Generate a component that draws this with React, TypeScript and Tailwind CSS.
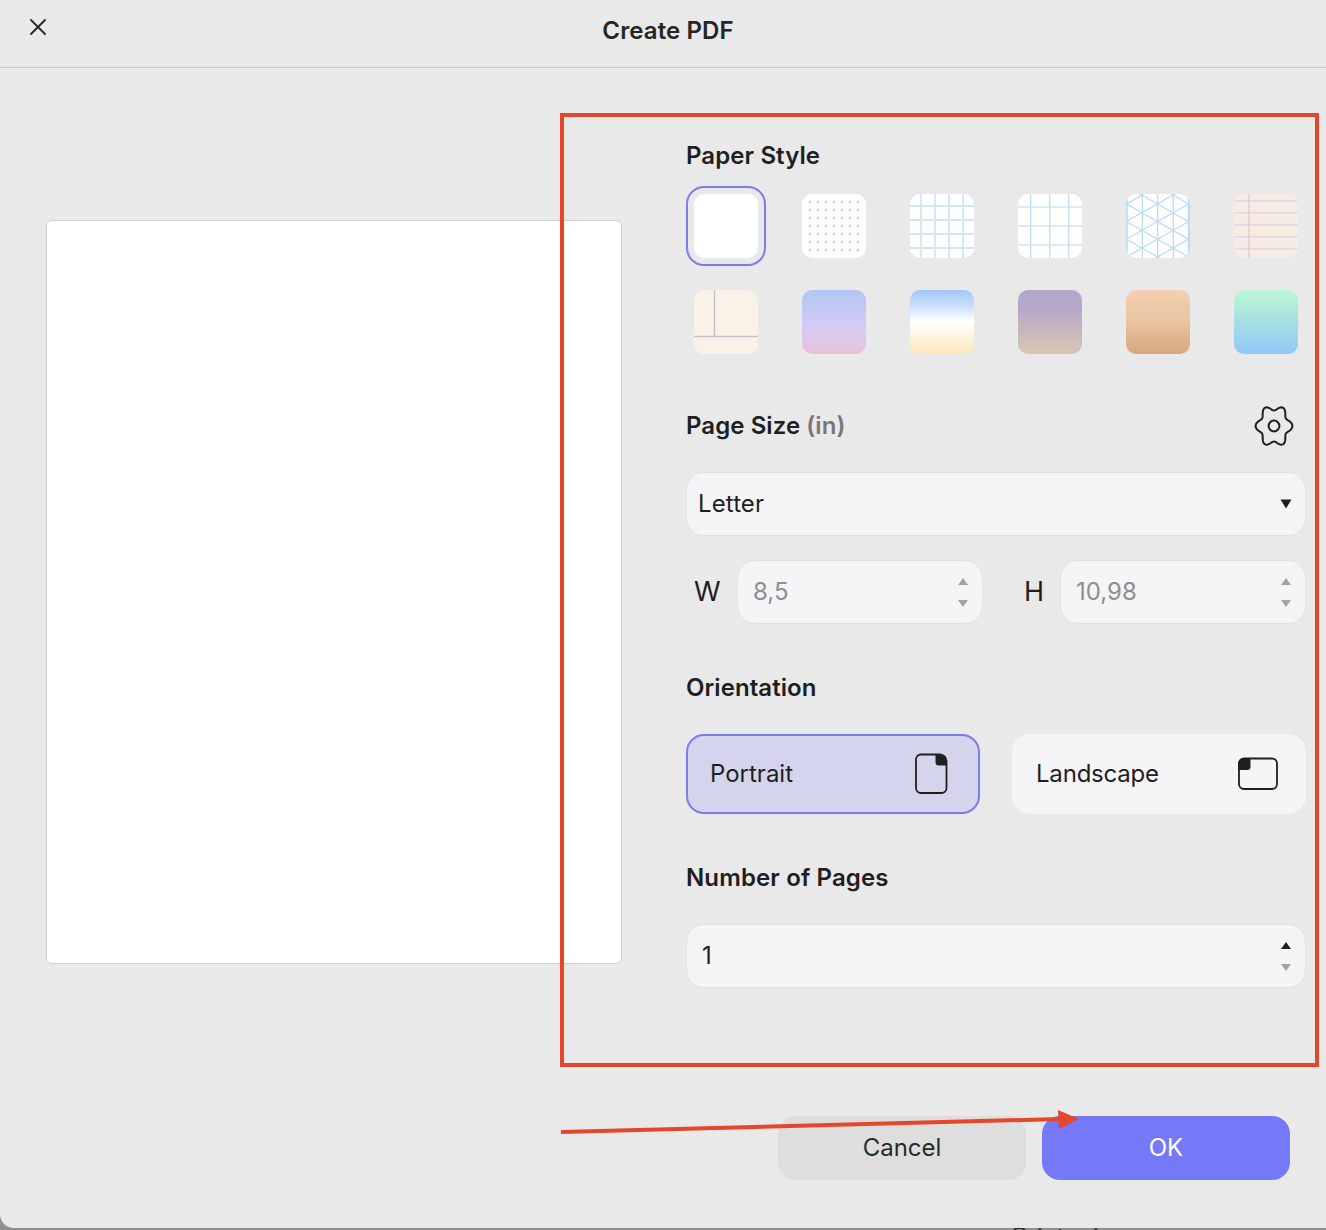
import { X } from 'lucide-react'

const FONT = "font-['Inter','Liberation_Sans',sans-serif]"

function Swatch({ className = '', children }: { className?: string; children?: React.ReactNode }) {
  return <div className={`w-16 h-16 rounded-[10px] overflow-hidden ${className}`}>{children}</div>
}

function Lines({ x = [], y = [], color, width = 1, xColor, xWidth }: { x?: number[]; y?: number[]; color: string; width?: number; xColor?: string; xWidth?: number }) {
  return (
    <svg viewBox="0 0 64 64" className="w-16 h-16 block">
      {y.map((v) => <line key={`y${v}`} x1="0" x2="64" y1={v} y2={v} stroke={color} strokeWidth={width} />)}
      {x.map((v) => <line key={`x${v}`} y1="0" y2="64" x1={v} x2={v} stroke={xColor ?? color} strokeWidth={xWidth ?? width} />)}
    </svg>
  )
}

function Dots() {
  const pos = [8, 16, 24, 32, 40, 48, 56]
  return (
    <svg viewBox="0 0 64 64" className="w-16 h-16 block">
      {pos.map((y) => pos.map((x) => <circle key={`${x}-${y}`} cx={x} cy={y} r="1.5" fill="#d4d4d6" />))}
    </svg>
  )
}

function Iso() {
  const c = '#bcdcf2'
  const rows = [-3, -2, -1, 0, 1, 2, 3, 4]
  return (
    <svg viewBox="0 0 64 64" className="w-16 h-16 block">
      {[0.5, 16.3, 31.7, 47.3, 63].map((v) => <line key={v} x1={v} x2={v} y1="0" y2="64" stroke={c} strokeWidth={v < 1 || v > 62 ? 2.5 : 1.3} />)}
      {rows.map((k) => <line key={`a${k}`} x1="0" x2="64" y1={-8.1 + 17.7 * k} y2={28.4 + 17.7 * k} stroke={c} strokeWidth="1.3" />)}
      {rows.map((k) => <line key={`b${k}`} x1="0" x2="64" y1={10.1 + 17.7 * k} y2={-26.4 + 17.7 * k} stroke={c} strokeWidth="1.3" />)}
    </svg>
  )
}

function Cornell() {
  return (
    <svg viewBox="0 0 64 64" className="w-16 h-16 block">
      <line x1="20.5" x2="20.5" y1="0" y2="46" stroke="#c2c1c8" strokeWidth="1.4" />
      <line x1="0" x2="64" y1="46.5" y2="46.5" stroke="#c2c1c8" strokeWidth="1.4" />
    </svg>
  )
}

// six lobes, a little taller than wide
function gearPath() {
  const pts: string[] = []
  for (let i = 0; i < 120; i++) {
    const a = (i / 120) * Math.PI * 2
    const r = 16 + 2.4 * Math.cos(6 * a)
    pts.push(`${(20 + r * Math.cos(a)).toFixed(2)} ${(20 + r * 1.14 * Math.sin(a)).toFixed(2)}`)
  }
  return `M${pts.join('L')}z`
}

function Gear() {
  return (
    <svg width="40" height="40" viewBox="0 0 40 40" fill="none" stroke="#1f1f22" strokeWidth="2">
      <path d={gearPath()} strokeLinejoin="round" />
      <circle cx="20" cy="20" r="5.4" />
    </svg>
  )
}

function Stepper({ upDark = false }: { upDark?: boolean }) {
  return (
    <div className="flex flex-col gap-[13px]">
      <svg width="12" height="9" viewBox="0 0 12 9"><path d="M6 1l5 7H1z" fill={upDark ? '#1f1f22' : '#a3a3a6'} /></svg>
      <svg width="12" height="9" viewBox="0 0 12 9"><path d="M1 1h10L6 8z" fill="#a3a3a6" /></svg>
    </div>
  )
}

function PortraitIcon() {
  return (
    <svg width="34" height="42" viewBox="0 0 34 42" fill="none">
      <path d="M7 1.5h19.5L32.5 7.5V35a5 5 0 0 1-5 5H7a5 5 0 0 1-5-5V6.5a5 5 0 0 1 5-5z" stroke="#1f1f22" strokeWidth="1.8" />
      <path d="M21.5 1h5.5a6 6 0 0 1 6 6v5.5H25a3.5 3.5 0 0 1-3.5-3.5z" fill="#1f1f22" />
    </svg>
  )
}

function LandscapeIcon() {
  return (
    <svg width="42" height="34" viewBox="0 0 42 34" fill="none">
      <path d="M7 1.5h28a5 5 0 0 1 5 5V27a5 5 0 0 1-5 5H7a5 5 0 0 1-5-5V6.5a5 5 0 0 1 5-5z" stroke="#1f1f22" strokeWidth="1.8" />
      <path d="M7 1h6.5v8.5a3.5 3.5 0 0 1-3.5 3.5H1V7a6 6 0 0 1 6-6z" fill="#1f1f22" />
    </svg>
  )
}

const inputBox = 'h-16 rounded-[18px] bg-[#f5f4f6] border border-[#e3e3e5] flex items-center justify-between'

export default function App() {
  return (
    <div className={`${FONT} relative w-[1326px] h-[1230px] overflow-hidden bg-[#8f8f8f] text-[#1f1f22]`}>
      <span className="absolute left-[1012px] top-[1225px] text-2xl leading-6 text-[#2a2a2a]">Printer.js</span>

      <div className="relative h-[1228px] rounded-bl-[14px] bg-[#e9e9e9] flex flex-col">
        <header className="h-[68px] shrink-0 border-b border-[#cbcbcb] grid grid-cols-[1fr_auto_1fr]">
          <div className="pl-[24px] pt-[13px]">
            <X size={28} strokeWidth={1.6} color="#2a2a2a" />
          </div>
          <h1 className="pl-[10px] text-2xl font-semibold leading-[62px] tracking-[0.1px] text-[#262626]">Create PDF</h1>
          <div />
        </header>

        <div className="flex flex-1 min-h-0">
          <div className="w-[686px] shrink-0 pl-[46px] pt-[152px]">
            <div className="w-[576px] h-[744px] bg-white border border-[#cfcfcf] rounded-[6px]" />
          </div>

          <div className="w-[620px] shrink-0 flex flex-col">
            <h2 className="mt-[70px] text-2xl font-semibold leading-[36px] tracking-[0.1px]">Paper Style</h2>

            <div className="mt-3 grid grid-cols-[repeat(6,80px)] gap-x-7 gap-y-4">
              <div className="w-20 h-20 p-[6px] rounded-[18px] border-2 border-[#7b7df0] flex items-center justify-center">
                <Swatch className="bg-white shrink-0" />
              </div>
              <div className="w-20 h-20 p-2"><Swatch className="bg-white"><Dots /></Swatch></div>
              <div className="w-20 h-20 p-2"><Swatch className="bg-white"><Lines x={[11, 25, 39, 53]} y={[12, 26, 40, 54]} color="#d3e5f3" width={1.8} /></Swatch></div>
              <div className="w-20 h-20 p-2"><Swatch className="bg-white"><Lines x={[12.7, 31.7, 50.7]} y={[13, 32, 51]} color="#b8d8ee" xColor="#c8e0f3" width={1} xWidth={1.5} /></Swatch></div>
              <div className="w-20 h-20 p-2"><Swatch className="bg-white"><Iso /></Swatch></div>
              <div className="w-20 h-20 p-2"><Swatch className="bg-[#f5ece3]"><Lines x={[15]} y={[6.7, 18.7, 30.7, 42.7, 54.7]} color="#e6d6e2" xColor="#ecc8ce" width={1.5} /></Swatch></div>

              <div className="w-20 h-20 p-2"><Swatch className="bg-[#f8f2e7]"><Cornell /></Swatch></div>
              <div className="w-20 h-20 p-2"><Swatch className="bg-[linear-gradient(180deg,#b1c6f2_0%,#d5cbf6_58%,#e8c2d9_100%)]" /></div>
              <div className="w-20 h-20 p-2"><Swatch className="bg-[linear-gradient(180deg,#a2c6f6_0%,#cfe2fa_28%,#ffffff_48%,#fdf6e2_70%,#fbe8bd_100%)]" /></div>
              <div className="w-20 h-20 p-2"><Swatch className="bg-[linear-gradient(180deg,#b2a5cb_0%,#b6a8c8_30%,#cdb9bb_70%,#d8c6b5_100%)]" /></div>
              <div className="w-20 h-20 p-2"><Swatch className="bg-[linear-gradient(180deg,#f4cfb2_0%,#ebc6a3_45%,#d6a77a_100%)]" /></div>
              <div className="w-20 h-20 p-2"><Swatch className="bg-[linear-gradient(180deg,#bdf7d6_0%,#a6dfe2_50%,#90c8f8_100%)]" /></div>
            </div>

            <div className="mt-[43px] h-[42px] flex items-center justify-between pr-[12px]">
              <h2 className="text-2xl font-semibold tracking-[0.07px]">
                Page Size <span className="text-[#77777b]">(in)</span>
              </h2>
              <Gear />
            </div>

            <div className={`${inputBox} mt-[25px] pl-[11px] pr-[13px]`}>
              <span className="text-2xl tracking-[0.1px]">Letter</span>
              <svg width="12" height="10" viewBox="0 0 12 10"><path d="M0.5 0.5h11L6 9.5z" fill="#1f1f22" /></svg>
            </div>

            <div className="mt-6 flex items-center">
              <span className="w-[51px] pl-2 text-[27px]">W</span>
              <div className={`${inputBox} w-[246px] pl-[15px] pr-[13px]`}>
                <span className="text-2xl text-[#8e8e92]">8,5</span>
                <Stepper />
              </div>
              <span className="w-[77px] pl-[41px] text-[27px]">H</span>
              <div className={`${inputBox} w-[246px] pl-[15px] pr-[13px]`}>
                <span className="text-2xl text-[#8e8e92]">10,98</span>
                <Stepper />
              </div>
            </div>

            <h2 className="mt-[46px] text-2xl font-semibold leading-[36px] tracking-[0.07px]">Orientation</h2>

            <div className="mt-[28px] flex justify-between">
              <div className="w-[294px] h-20 pl-[22px] pr-[30px] rounded-[18px] bg-[#d4d4ec] border-2 border-[#7b7df0] flex items-center justify-between">
                <span className="text-2xl">Portrait</span>
                <PortraitIcon />
              </div>
              <div className="w-[294px] h-20 pl-6 pr-[27px] rounded-[18px] bg-[#f5f4f6] flex items-center justify-between">
                <span className="text-2xl tracking-[-0.2px]">Landscape</span>
                <LandscapeIcon />
              </div>
            </div>

            <h2 className="mt-[46px] text-2xl font-semibold leading-[36px] tracking-[0.13px]">Number of Pages</h2>

            <div className={`${inputBox} mt-[28px] pl-[15px] pr-[13px]`}>
              <span className="text-2xl">1</span>
              <Stepper upDark />
            </div>

            <div className="mt-[128px] flex justify-end gap-4 pr-4">
              <button className="w-[248px] h-16 rounded-[18px] bg-[#dedede] text-2xl text-[#2a2a2a]">Cancel</button>
              <button className="w-[248px] h-16 rounded-[18px] bg-[#7579f8] text-2xl text-white">OK</button>
            </div>
          </div>
        </div>

        {/* annotations drawn on top of the shot */}
        <div className="absolute left-[560px] top-[113px] w-[759px] h-[954px] border-4 border-[#e4472c]" />
        <svg className="absolute left-0 top-0" width="1326" height="1228" viewBox="0 0 1326 1228" fill="none">
          <path d="M561 1132L1060 1119" stroke="#e4472c" strokeWidth="4" />
          <path d="M1058 1110L1079 1119L1059 1129z" fill="#e4472c" />
        </svg>
      </div>
    </div>
  )
}
